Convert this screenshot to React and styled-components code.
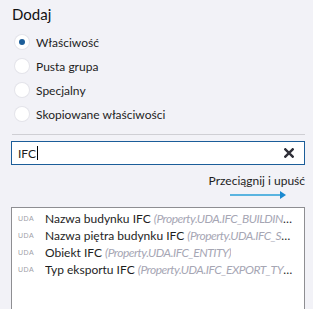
import React from "react";
import styled, { createGlobalStyle } from "styled-components";

const Global = createGlobalStyle`
  html, body {
    margin: 0;
    padding: 0;
    background: #f2f2f7;
  }
  body {
    font-family: Lato, "Noto Sans", sans-serif;
    color: #1e1e1e;
  }
`;

const Panel = styled.div`
  width: 313px;
  height: 309px;
  overflow: hidden;
  box-sizing: border-box;
  padding: 4px 8px 0 11px;
  display: flex;
  flex-direction: column;
`;

const Title = styled.div`
  font-size: 15px;
  line-height: 20px;
  padding-left: 1px;
  margin-bottom: 9px;
  color: #111;
`;

const Options = styled.div`
  display: flex;
  flex-direction: column;
  gap: 6px;
  padding-left: 4px;
`;

const Option = styled.label`
  display: flex;
  align-items: center;
  gap: 7px;
  height: 18px;
  font-size: 12px;
`;

const Radio = styled.span`
  width: 14px;
  height: 14px;
  border-radius: 50%;
  background: #ffffff;
  box-shadow: 0 0 0 1px #e4e4ea;
  display: flex;
  align-items: center;
  justify-content: center;
  &::after {
    content: "";
    width: 6px;
    height: 6px;
    border-radius: 50%;
    background: ${(p) => (p.$checked ? "#1b5d99" : "transparent")};
  }
`;

const Divider = styled.div`
  height: 1px;
  background: #cfcfd4;
  margin: 11px 0 6px 1px;
`;

const Search = styled.div`
  height: 24px;
  box-sizing: border-box;
  border: 1px solid #1b5d99;
  background: #ffffff;
  display: flex;
  align-items: center;
  padding: 0 10px 0 6px;
  font-size: 12px;
`;

const SearchText = styled.span`
  flex: 1;
  display: flex;
  align-items: center;
  &::after {
    content: "";
    width: 1px;
    height: 14px;
    background: #000;
    margin-left: 1px;
  }
`;

const Drag = styled.div`
  display: flex;
  flex-direction: column;
  align-items: flex-end;
  margin-top: 8px;
  font-size: 12px;
  line-height: 16px;
`;

const ArrowWrap = styled.div`
  margin-right: 19px;
  margin-top: 2px;
  height: 8px;
  display: flex;
`;

const List = styled.div`
  margin-top: 8px;
  flex: 1;
  background: #ffffff;
  border: 1px solid #8e8e92;
  border-bottom: none;
  padding: 2px 0 0 6px;
  display: flex;
  flex-direction: column;
`;

const Row = styled.div`
  display: flex;
  align-items: center;
  height: 17px;
  font-size: 12px;
  white-space: nowrap;
  overflow: hidden;
  padding-right: 11px;
`;

const Tag = styled.span`
  font-family: "Liberation Sans", sans-serif;
  font-size: 7px;
  letter-spacing: 0.5px;
  color: #a0a0a8;
  width: 27px;
  flex-shrink: 0;
`;

const Label = styled.span`
  overflow: hidden;
  text-overflow: ellipsis;
`;

const Path = styled.span`
  color: #a6a6b4;
  font-style: italic;
  letter-spacing: -0.5px;
`;

const options = [
  { text: "Właściwość", checked: true },
  { text: "Pusta grupa" },
  { text: "Specjalny" },
  { text: "Skopiowane właściwości" },
];

const items = [
  { name: "Nazwa budynku IFC", path: "Property.UDA.IFC_BUILDING_NAME" },
  { name: "Nazwa piętra budynku IFC", path: "Property.UDA.IFC_STOREY_NAME" },
  { name: "Obiekt IFC", path: "Property.UDA.IFC_ENTITY" },
  { name: "Typ eksportu IFC", path: "Property.UDA.IFC_EXPORT_TYPE" },
];

function ClearIcon() {
  return (
    <svg width="10" height="10" viewBox="0 0 10 10">
      <path d="M1.3 1.3 L8.7 8.7 M8.7 1.3 L1.3 8.7" stroke="#2f2f38" strokeWidth="2.4" strokeLinecap="square" />
    </svg>
  );
}

function DragArrow() {
  return (
    <svg width="56" height="8" viewBox="0 0 56 8">
      <rect x="0" y="3" width="50" height="2" fill="#5ab4e0" />
      <path d="M50 0 L56 4 L50 8 Z" fill="#1c8ad0" />
    </svg>
  );
}

export default function App() {
  return (
    <>
      <Global />
      <Panel>
        <Title>Dodaj</Title>
        <Options>
          {options.map((o) => (
            <Option key={o.text}>
              <Radio $checked={o.checked} />
              {o.text}
            </Option>
          ))}
        </Options>
        <Divider />
        <Search>
          <SearchText>IFC</SearchText>
          <ClearIcon />
        </Search>
        <Drag>
          Przeciągnij i upuść
          <ArrowWrap>
            <DragArrow />
          </ArrowWrap>
        </Drag>
        <List>
          {items.map((it) => (
            <Row key={it.name}>
              <Tag>UDA</Tag>
              <Label>
                {it.name} <Path>({it.path})</Path>
              </Label>
            </Row>
          ))}
        </List>
      </Panel>
    </>
  );
}
